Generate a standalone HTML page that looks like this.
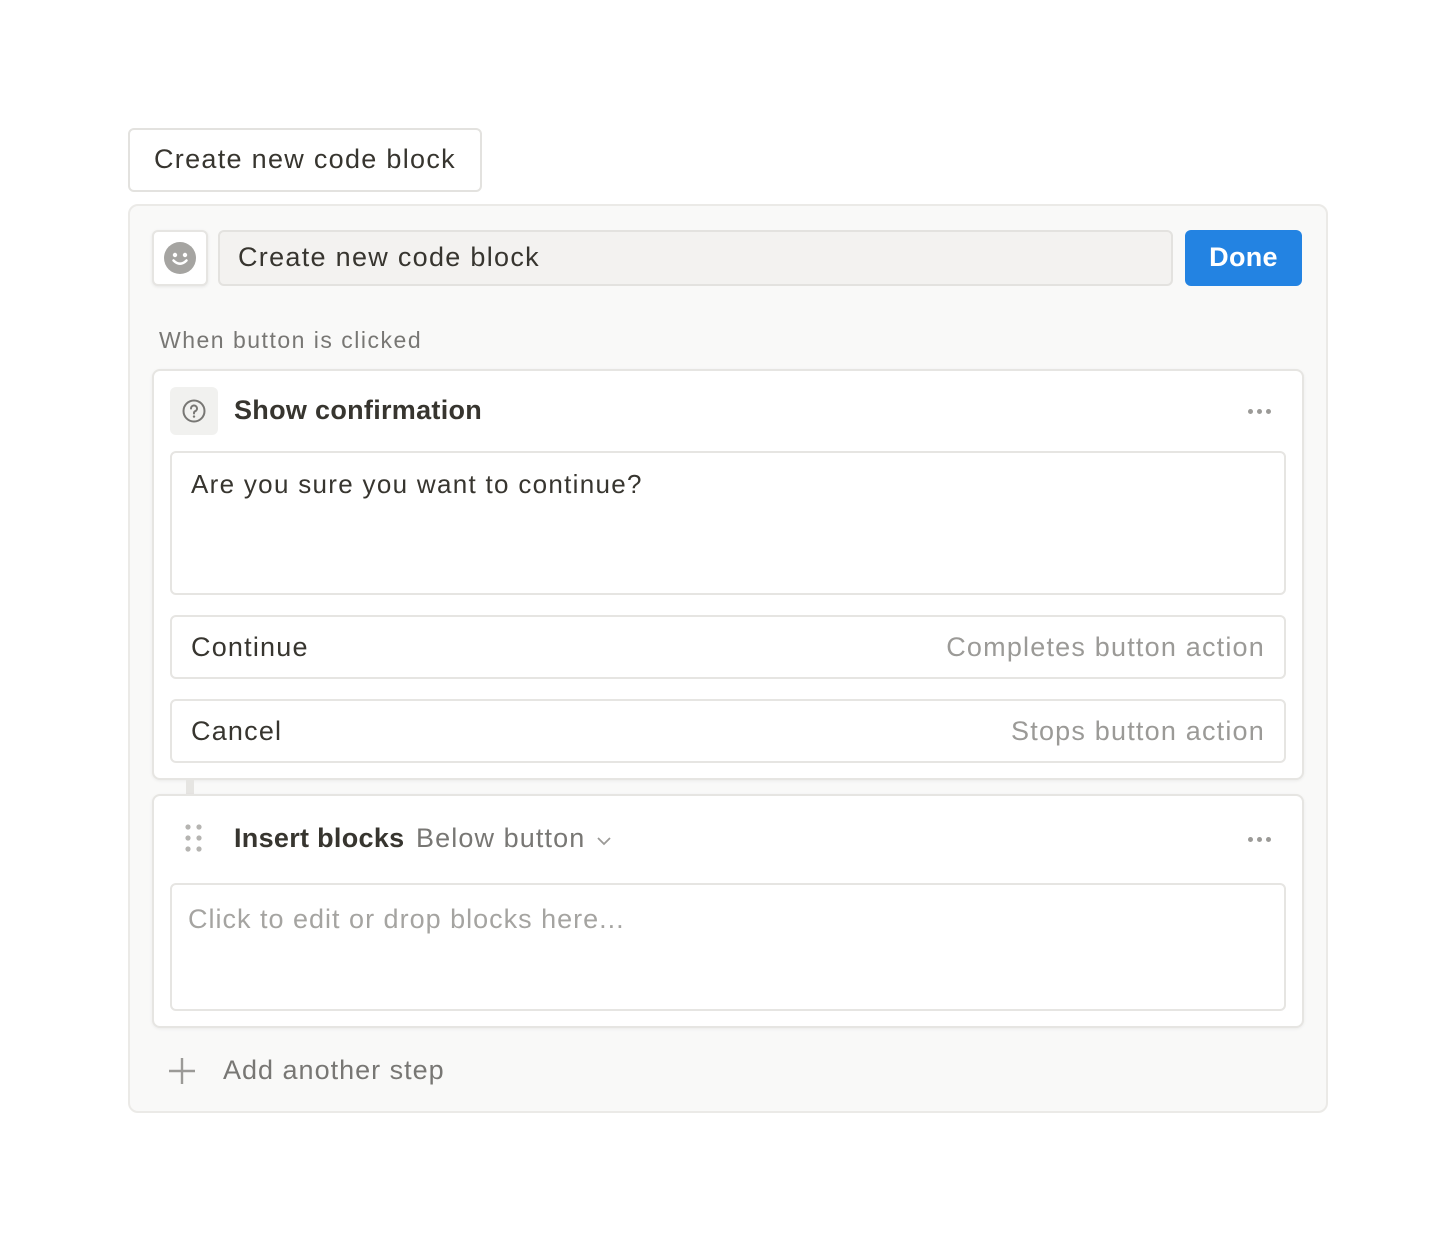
<!DOCTYPE html>
<html><head><meta charset="utf-8"><style>
*{box-sizing:border-box;margin:0;padding:0}
body{width:1456px;height:1241px;background:#fff;font-family:"Liberation Sans",sans-serif;position:relative;color:#37352f;overflow:hidden}
.a{position:absolute}
.t{position:absolute;white-space:nowrap;letter-spacing:1.2px}
.b{letter-spacing:0.3px;font-weight:bold}
.dots{position:absolute;display:flex;gap:4px}
.dots i{width:5px;height:5px;border-radius:50%;background:#9b9a97;display:block}
</style></head><body>
<div class="a" style="left:128px;top:128px;width:354px;height:64px;border:2px solid #e3e2df;border-radius:6px"></div>
<div class="t" style="left:154px;top:144px;font-size:27px;color:#37352f;letter-spacing:1.3px">Create new code block</div>

<div class="a" style="left:128px;top:204px;width:1200px;height:909px;border:2px solid #ebeae7;border-radius:10px;background:#f9f9f8"></div>

<div class="a" style="left:152px;top:230px;width:56px;height:56px;border:2px solid #e6e5e2;border-radius:6px;background:#fff;box-shadow:0 1px 3px rgba(0,0,0,.08)"></div>
<svg class="a" style="left:164px;top:242px" width="32" height="32" viewBox="0 0 32 32"><circle cx="16" cy="16" r="16" fill="#a5a4a1"/><circle cx="11" cy="13" r="2.2" fill="#fff"/><circle cx="21" cy="13" r="2.2" fill="#fff"/><path d="M9.5 18.5 Q16 25 22.5 18.5" stroke="#fff" stroke-width="2.5" fill="none" stroke-linecap="round"/></svg>
<div class="a" style="left:218px;top:230px;width:955px;height:56px;border:2px solid #e3e2df;border-radius:6px;background:#f3f2f0"></div>
<div class="t" style="left:238px;top:242px;font-size:27px;letter-spacing:1.3px">Create new code block</div>
<div class="a" style="left:1185px;top:230px;width:117px;height:56px;border-radius:6px;background:#2383e2"></div>
<div class="t" style="left:1185px;top:242px;width:117px;text-align:center;font-size:27px;color:#fff;font-weight:bold;letter-spacing:0.3px">Done</div>

<div class="t" style="left:159px;top:327px;font-size:23px;color:#787774;letter-spacing:1.5px">When button is clicked</div>

<div class="a" style="left:152px;top:369px;width:1152px;height:411px;border:2px solid #e6e5e2;border-radius:8px;background:#fff;box-shadow:0 1px 3px rgba(0,0,0,.06)"></div>
<div class="a" style="left:170px;top:387px;width:48px;height:48px;border-radius:6px;background:#f1f1ef"></div>
<svg class="a" style="left:182px;top:399px" width="24" height="24" viewBox="0 0 24 24"><circle cx="12" cy="12" r="10.5" stroke="#787774" stroke-width="2" fill="none"/><path d="M9 9.5a3 3 0 1 1 4.2 2.7c-.8.4-1.2 1-1.2 1.8v.5" stroke="#787774" stroke-width="2" fill="none" stroke-linecap="round"/><circle cx="12" cy="17.6" r="1.2" fill="#787774"/></svg>
<div class="t b" style="left:234px;top:395px;font-size:27px;color:#37352f">Show confirmation</div>
<div class="dots" style="left:1248px;top:409px"><i></i><i></i><i></i></div>

<div class="a" style="left:170px;top:451px;width:1116px;height:144px;border:2px solid #e6e5e2;border-radius:6px"></div>
<div class="t" style="left:191px;top:469px;font-size:26px;letter-spacing:1.3px">Are you sure you want to continue?</div>
<div class="a" style="left:170px;top:615px;width:1116px;height:64px;border:2px solid #e6e5e2;border-radius:6px"></div>
<div class="t" style="left:191px;top:632px;font-size:27px">Continue</div>
<div class="t" style="right:191px;top:632px;font-size:27px;color:#9b9a97">Completes button action</div>
<div class="a" style="left:170px;top:699px;width:1116px;height:64px;border:2px solid #e6e5e2;border-radius:6px"></div>
<div class="t" style="left:191px;top:716px;font-size:27px">Cancel</div>
<div class="t" style="right:191px;top:716px;font-size:27px;color:#9b9a97">Stops button action</div>

<div class="a" style="left:186px;top:780px;width:8px;height:15px;background:#e6e5e2"></div>

<div class="a" style="left:152px;top:794px;width:1152px;height:234px;border:2px solid #e6e5e2;border-radius:8px;background:#fff;box-shadow:0 1px 3px rgba(0,0,0,.06)"></div>
<svg class="a" style="left:184px;top:824px" width="20" height="30" viewBox="0 0 20 30"><g fill="#b5b4b1"><circle cx="4" cy="3" r="2.6"/><circle cx="15" cy="3" r="2.6"/><circle cx="4" cy="14" r="2.6"/><circle cx="15" cy="14" r="2.6"/><circle cx="4" cy="25" r="2.6"/><circle cx="15" cy="25" r="2.6"/></g></svg>
<div class="t b" style="left:234px;top:823px;font-size:27px">Insert blocks</div>
<div class="t" style="left:416px;top:823px;font-size:27px;color:#787774;letter-spacing:1.1px">Below button</div>
<svg class="a" style="left:596px;top:835px" width="16" height="12" viewBox="0 0 16 12"><path d="M2 3l6 6 6-6" stroke="#9b9a97" stroke-width="1.8" fill="none"/></svg>
<div class="dots" style="left:1248px;top:837px"><i></i><i></i><i></i></div>
<div class="a" style="left:170px;top:883px;width:1116px;height:128px;border:2px solid #e6e5e2;border-radius:6px"></div>
<div class="t" style="left:188px;top:904px;font-size:27px;color:#a5a4a1;letter-spacing:1px">Click to edit or drop blocks here...</div>

<svg class="a" style="left:168px;top:1057px" width="28" height="28" viewBox="0 0 28 28"><path d="M14 1v26M1 14h26" stroke="#9b9a97" stroke-width="2.4"/></svg>
<div class="t" style="left:223px;top:1055px;font-size:27px;color:#787774;letter-spacing:1px">Add another step</div>
</body></html>
